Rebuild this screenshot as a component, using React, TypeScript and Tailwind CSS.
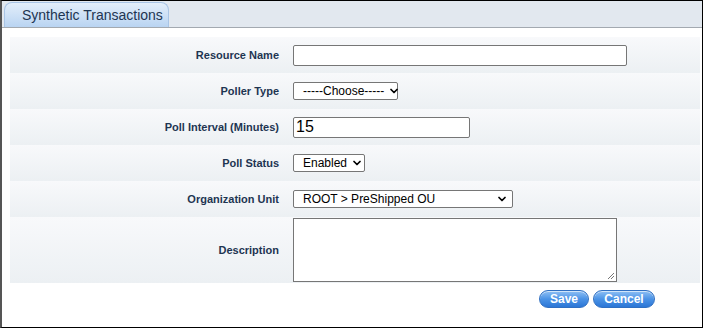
import { ChevronDown } from 'lucide-react';

const font = { fontFamily: '"Liberation Sans", Arial, sans-serif' };

function Row({ label, tall, children }: { label: string; tall?: boolean; children: React.ReactNode }) {
  return (
    <div className={`flex items-center bg-gradient-to-b from-[#f8f9fb] to-[#ecf0f3] ${tall ? 'h-[66px]' : 'h-[36px]'}`}>
      <div className="w-[283px] shrink-0 pr-[14px] text-right text-[11px] font-bold text-[#1e3552]">{label}</div>
      <div className="flex items-center">{children}</div>
    </div>
  );
}

function Select({ value, width }: { value: string; width: string }) {
  return (
    <div className={`flex h-[18px] ${width} shrink-0 items-center justify-between gap-[4px] whitespace-nowrap rounded-[2px] border border-[#767676] bg-white pl-[9px] pr-[4px] text-[12px] text-black`}>
      <span>{value}</span>
      <ChevronDown className="h-[12px] w-[12px] shrink-0" strokeWidth={3.5} />
    </div>
  );
}

function PillButton({ children, width }: { children: React.ReactNode; width: string }) {
  return (
    <button className={`h-[18px] ${width} rounded-full border border-[#2f6fc2] bg-gradient-to-b from-[#8fc0f4] via-[#4b93e6] to-[#2b76d6] text-[12px] font-bold leading-none text-white shadow-[inset_0_1px_0_rgba(255,255,255,.6)]`}>
      {children}
    </button>
  );
}

export default function App() {
  return (
    <div style={font} className="h-[328px] w-[703px] border border-black border-l-2 border-l-[#555] bg-white">
      <div className="flex h-[27px] items-end border-b border-[#a3a9b0] bg-[#e2e8ef] pl-[2px]">
        <div className="flex h-[25px] w-[165px] items-center rounded-t-[8px] border border-b-0 border-[#a9c5e6] bg-gradient-to-b from-[#e3eefa] to-[#b9d4f2] pl-[17px] text-[14px] text-[#1e3552]">
          Synthetic Transactions
        </div>
      </div>
      <div className="ml-[8px] mr-[2px] mt-[9px] flex flex-col">
        <Row label="Resource Name">
          <div className="h-[21px] w-[334px] rounded-[2px] border border-[#767676] bg-white" />
        </Row>
        <Row label="Poller Type">
          <Select value="-----Choose-----" width="w-[105px]" />
        </Row>
        <Row label="Poll Interval (Minutes)">
          <div className="flex h-[21px] w-[177px] items-center rounded-[2px] border border-[#767676] bg-white pl-[2px] text-[16px] text-black">15</div>
        </Row>
        <Row label="Poll Status">
          <Select value="Enabled" width="w-[72px]" />
        </Row>
        <Row label="Organization Unit">
          <Select value="ROOT > PreShipped OU" width="w-[220px]" />
        </Row>
        <Row label="Description" tall>
          <div className="relative h-[64px] w-[324px] border border-[#767676] bg-white">
            <svg className="absolute bottom-[1px] right-[1px]" width="9" height="9" viewBox="0 0 9 9">
              <path d="M8 2 L2 8 M8 5 L5 8" stroke="#777" strokeWidth="1" />
            </svg>
          </div>
        </Row>
      </div>
      <div className="flex justify-end gap-[4px] pr-[47px] pt-[7px]">
        <PillButton width="w-[50px]">Save</PillButton>
        <PillButton width="w-[62px]">Cancel</PillButton>
      </div>
    </div>
  );
}
